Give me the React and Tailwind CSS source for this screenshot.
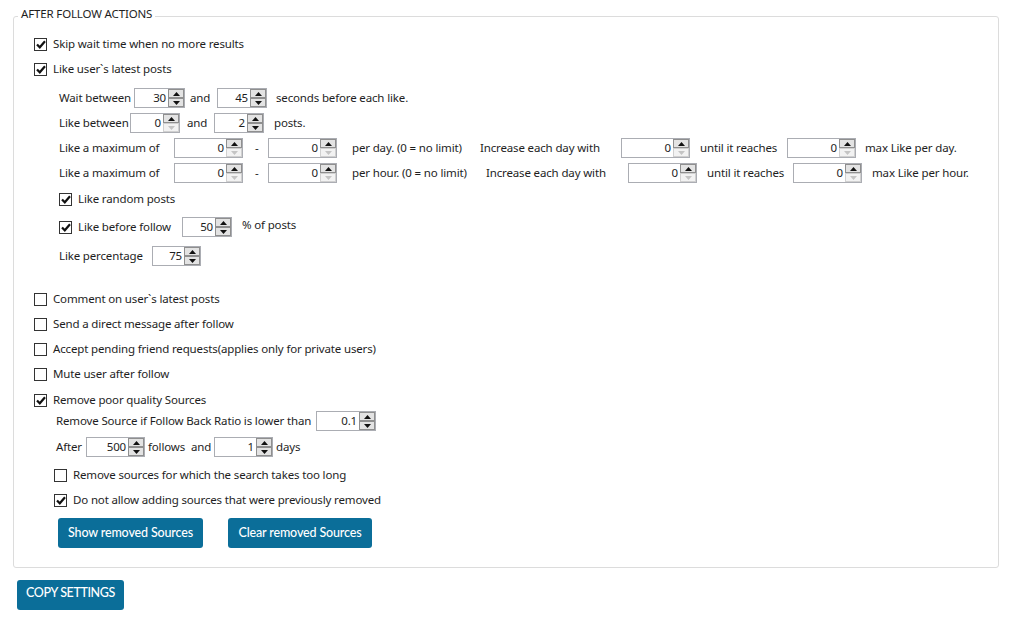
import React from 'react';

const font = { fontFamily: '"Noto Sans", "Open Sans", sans-serif' };

function Arrow({ up, dim }) {
  return (
    <svg width="7" height="4" viewBox="0 0 7 4" className="block">
      <path d={up ? 'M0 4 L3.5 0 L7 4 Z' : 'M0 0 L3.5 4 L7 0 Z'} fill={dim ? '#c4c4c4' : '#111'} />
    </svg>
  );
}

function Spin({ value, w }) {
  const low = value === '0';
  return (
    <div className={`flex h-[20px] shrink-0 items-center border border-[#abadb3] bg-white ${w}`}>
      <span className="flex-1 pr-[2px] text-right leading-[18px]">{value}</span>
      <div className="flex h-full w-[16px] flex-col">
        <div className="flex h-[9px] items-center justify-center border border-[#8f8f8f] bg-[#e3e3e3]">
          <Arrow up />
        </div>
        <div
          className={[
            'flex h-[9px] items-center justify-center border',
            low ? 'border-[#d0d0d0] bg-[#f2f2f2]' : 'border-[#8f8f8f] bg-[#e3e3e3]',
          ].join(' ')}
        >
          <Arrow dim={low} />
        </div>
      </div>
    </div>
  );
}

function Check({ checked, label, className = '' }) {
  return (
    <div className={`flex h-[20px] items-center ${className}`}>
      <span className="flex h-[13px] w-[13px] shrink-0 items-center justify-center border border-[#333] bg-white">
        {checked ? (
          <svg width="10" height="9" viewBox="0 0 10 9">
            <path d="M1 4.4 L3.8 7.3 L9 1.2" fill="none" stroke="#111" strokeWidth="2.2" />
          </svg>
        ) : null}
      </span>
      <span className="ml-[6px] whitespace-nowrap leading-[20px]">{label}</span>
    </div>
  );
}

function Row({ className = '', children }) {
  return <div className={`flex h-[20px] items-center whitespace-nowrap ${className}`}>{children}</div>;
}

function BlueButton({ children, className = '' }) {
  return (
    <button
      className={`h-[30px] rounded-[3px] bg-[#0b6e99] text-[12.5px] font-medium text-white ${className}`}
      style={{ fontFamily: 'Lato, "Open Sans", sans-serif' }}
    >
      {children}
    </button>
  );
}

export default function App() {
  return (
    <div className="min-h-[619px] w-[1016px] bg-white text-[11.5px] tracking-[-0.15px] text-[#1e1e1e]" style={font}>
      <div className="relative ml-[13px] mt-[16px] w-[986px] rounded-[3px] border border-[#dcdcdc] pb-[19px] pt-[17px]">
        <span className="absolute -top-[11px] left-[4px] bg-white px-[3px] leading-[16px]">AFTER FOLLOW ACTIONS</span>

        <div className="pl-[20px]">
          <Check checked label="Skip wait time when no more results" />
          <Check checked label="Like user`s latest posts" className="mt-[5px]" />
        </div>

        <div className="pl-[45px]">
          <Row className="mt-[9px]">
            <span className="w-[75px]">Wait between</span>
            <Spin value="30" w="w-[51px]" />
            <span className="w-[32px] pl-[5px]">and</span>
            <Spin value="45" w="w-[50px]" />
            <span className="ml-[9px]">seconds before each like.</span>
          </Row>
          <Row className="mt-[5px]">
            <span className="w-[71px]">Like between</span>
            <Spin value="0" w="w-[50px]" />
            <span className="w-[34px] pl-[7px]">and</span>
            <Spin value="2" w="w-[50px]" />
            <span className="ml-[10px]">posts.</span>
          </Row>
          <Row className="mt-[5px]">
            <span className="w-[115px]">Like a maximum of</span>
            <Spin value="0" w="w-[69px]" />
            <span className="w-[25px] pl-[12px]">-</span>
            <Spin value="0" w="w-[69px]" />
            <span className="ml-[15px] w-[128px]">per day. (0 = no limit)</span>
            <span className="w-[141px]">Increase each day with</span>
            <Spin value="0" w="w-[69px]" />
            <span className="ml-[10px] w-[87px]">until it reaches</span>
            <Spin value="0" w="w-[69px]" />
            <span className="ml-[9px]">max Like per day.</span>
          </Row>
          <Row className="mt-[5px]">
            <span className="w-[115px]">Like a maximum of</span>
            <Spin value="0" w="w-[69px]" />
            <span className="w-[25px] pl-[12px]">-</span>
            <Spin value="0" w="w-[69px]" />
            <span className="ml-[15px] w-[134px]">per hour. (0 = no limit)</span>
            <span className="w-[142px]">Increase each day with</span>
            <Spin value="0" w="w-[69px]" />
            <span className="ml-[10px] w-[86px]">until it reaches</span>
            <Spin value="0" w="w-[69px]" />
            <span className="ml-[10px]">max Like per hour.</span>
          </Row>
          <Check checked label="Like random posts" className="mt-[6px]" />
          <Row className="mt-[8px]">
            <Check checked label="Like before follow" className="w-[123px]" />
            <Spin value="50" w="w-[50px]" />
            <span className="-mt-[4px] ml-[10px]">% of posts</span>
          </Row>
          <Row className="mt-[9px]">
            <span className="w-[93px]">Like percentage</span>
            <Spin value="75" w="w-[49px]" />
          </Row>
        </div>

        <div className="mt-[23px] pl-[20px]">
          <Check label="Comment on user`s latest posts" />
          <Check label="Send a direct message after follow" className="mt-[5px]" />
          <Check label="Accept pending friend requests(applies only for private users)" className="mt-[5px]" />
          <Check label="Mute user after follow" className="mt-[5px]" />
          <Check checked label="Remove poor quality Sources" className="mt-[6px]" />
        </div>

        <div className="pl-[42px]">
          <Row className="mt-[1px]">
            <span className="w-[260px]">Remove Source if Follow Back Ratio is lower than</span>
            <Spin value="0.1" w="w-[60px]" />
          </Row>
          <Row className="mt-[6px]">
            <span className="w-[30px]">After</span>
            <Spin value="500" w="w-[59px]" />
            <span className="ml-[3px] w-[43px]">follows</span>
            <span className="w-[23px]">and</span>
            <Spin value="1" w="w-[59px]" />
            <span className="ml-[3px]">days</span>
          </Row>
        </div>

        <div className="pl-[40px]">
          <Check label="Remove sources for which the search takes too long" className="mt-[8px]" />
          <Check checked label="Do not allow adding sources that were previously removed" className="mt-[5px]" />
        </div>

        <div className="mt-[8px] flex gap-[25px] pl-[44px]">
          <BlueButton className="w-[145px]">Show removed Sources</BlueButton>
          <BlueButton className="w-[144px]">Clear removed Sources</BlueButton>
        </div>
      </div>

      <BlueButton className="ml-[17px] mt-[12px] w-[107px] pb-[3px] tracking-[-0.4px]">COPY SETTINGS</BlueButton>
    </div>
  );
}
